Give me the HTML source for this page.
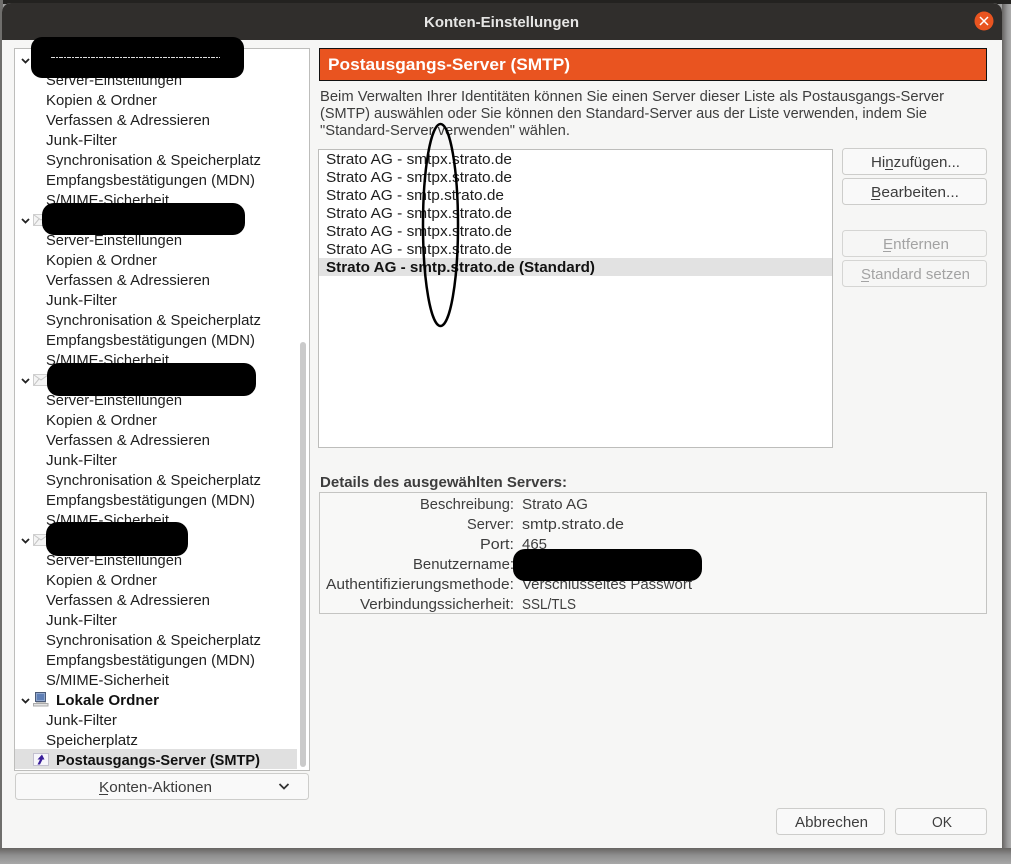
<!DOCTYPE html>
<html lang="de">
<head>
<meta charset="utf-8">
<title>Konten-Einstellungen</title>
<style>
html,body{margin:0;padding:0;background:#999;width:1011px;height:864px;overflow:hidden}
svg{display:block}
text{font-family:"Liberation Sans","DejaVu Sans",sans-serif;font-size:14.5px;fill:#3d3d3d}
.t text,text.t{fill:#1e1e1e}
text.b{font-weight:bold}
text.d{fill:#a3a3a3}
.btn{fill:#f9f9f9;stroke:#cdcdcb;stroke-width:1}
.btnd{fill:#f6f6f5;stroke:#d5d5d3;stroke-width:1}
.chev{fill:none;stroke:#222;stroke-width:1.8}
.u{stroke:#3d3d3d;stroke-width:1}
.ud{stroke:#a3a3a3;stroke-width:1}
</style>
</head>
<body>
<svg xmlns="http://www.w3.org/2000/svg" width="1011" height="864" viewBox="0 0 1011 864">
<defs>
<linearGradient id="sb" x1="0" y1="0" x2="0" y2="1"><stop offset="0" stop-color="#666462"/><stop offset=".45" stop-color="#8e8e8e"/><stop offset="1" stop-color="#a8a8a8"/></linearGradient>
<linearGradient id="sr" x1="0" y1="0" x2="1" y2="0"><stop offset="0" stop-color="#666462"/><stop offset=".6" stop-color="#999"/><stop offset="1" stop-color="#acacac"/></linearGradient>
</defs>

<!-- outside -->
<rect x="0" y="0" width="1011" height="864" fill="#a0a0a0"/>
<rect x="0" y="0" width="1011" height="4" fill="#232220"/>
<rect x="0" y="0" width="3" height="864" fill="#6f6e6c"/>
<rect x="1002" y="4" width="9" height="860" fill="url(#sr)"/>
<rect x="0" y="848" width="1011" height="16" fill="url(#sb)"/>

<!-- window -->
<path d="M2 848V12a9 9 0 0 1 9-9H993a9 9 0 0 1 9 9V848Z" fill="#f6f6f5"/>
<path d="M2 40V12a9 9 0 0 1 9-9H993a9 9 0 0 1 9 9V40Z" fill="#302e2c"/>
<text class="b" x="424" y="27" textLength="155" lengthAdjust="spacingAndGlyphs" style="fill:#e6e6e5">Konten-Einstellungen</text>
<circle cx="984" cy="21" r="9.500" fill="#e95420"/>
<path d="M980 17l8 8M988 17l-8 8" stroke="#fff" stroke-width="1.500" fill="none"/>

<!-- left tree -->
<rect x="14.500" y="48.500" width="295" height="722" fill="#fff" stroke="#bdbdbb"/>
<rect x="300" y="342" width="6" height="425" rx="3" fill="#cacaca"/>
<rect x="15" y="749" width="282" height="20" fill="#e0e0e0"/>

<g class="t">
<text x="46" y="85" textLength="136" lengthAdjust="spacingAndGlyphs">Server-Einstellungen</text>
<text x="46" y="105" textLength="111" lengthAdjust="spacingAndGlyphs">Kopien &amp; Ordner</text>
<text x="46" y="125" textLength="164" lengthAdjust="spacingAndGlyphs">Verfassen &amp; Adressieren</text>
<text x="46" y="145" textLength="71" lengthAdjust="spacingAndGlyphs">Junk-Filter</text>
<text x="46" y="165" textLength="215" lengthAdjust="spacingAndGlyphs">Synchronisation &amp; Speicherplatz</text>
<text x="46" y="185" textLength="209" lengthAdjust="spacingAndGlyphs">Empfangsbestätigungen (MDN)</text>
<text x="46" y="205" textLength="123" lengthAdjust="spacingAndGlyphs">S/MIME-Sicherheit</text>

<text x="46" y="245" textLength="136" lengthAdjust="spacingAndGlyphs">Server-Einstellungen</text>
<text x="46" y="265" textLength="111" lengthAdjust="spacingAndGlyphs">Kopien &amp; Ordner</text>
<text x="46" y="285" textLength="164" lengthAdjust="spacingAndGlyphs">Verfassen &amp; Adressieren</text>
<text x="46" y="305" textLength="71" lengthAdjust="spacingAndGlyphs">Junk-Filter</text>
<text x="46" y="325" textLength="215" lengthAdjust="spacingAndGlyphs">Synchronisation &amp; Speicherplatz</text>
<text x="46" y="345" textLength="209" lengthAdjust="spacingAndGlyphs">Empfangsbestätigungen (MDN)</text>
<text x="46" y="365" textLength="123" lengthAdjust="spacingAndGlyphs">S/MIME-Sicherheit</text>

<text x="46" y="405" textLength="136" lengthAdjust="spacingAndGlyphs">Server-Einstellungen</text>
<text x="46" y="425" textLength="111" lengthAdjust="spacingAndGlyphs">Kopien &amp; Ordner</text>
<text x="46" y="445" textLength="164" lengthAdjust="spacingAndGlyphs">Verfassen &amp; Adressieren</text>
<text x="46" y="465" textLength="71" lengthAdjust="spacingAndGlyphs">Junk-Filter</text>
<text x="46" y="485" textLength="215" lengthAdjust="spacingAndGlyphs">Synchronisation &amp; Speicherplatz</text>
<text x="46" y="505" textLength="209" lengthAdjust="spacingAndGlyphs">Empfangsbestätigungen (MDN)</text>
<text x="46" y="525" textLength="123" lengthAdjust="spacingAndGlyphs">S/MIME-Sicherheit</text>

<text x="46" y="565" textLength="136" lengthAdjust="spacingAndGlyphs">Server-Einstellungen</text>
<text x="46" y="585" textLength="111" lengthAdjust="spacingAndGlyphs">Kopien &amp; Ordner</text>
<text x="46" y="605" textLength="164" lengthAdjust="spacingAndGlyphs">Verfassen &amp; Adressieren</text>
<text x="46" y="625" textLength="71" lengthAdjust="spacingAndGlyphs">Junk-Filter</text>
<text x="46" y="645" textLength="215" lengthAdjust="spacingAndGlyphs">Synchronisation &amp; Speicherplatz</text>
<text x="46" y="665" textLength="209" lengthAdjust="spacingAndGlyphs">Empfangsbestätigungen (MDN)</text>
<text x="46" y="685" textLength="123" lengthAdjust="spacingAndGlyphs">S/MIME-Sicherheit</text>

<text class="b" x="56" y="705" textLength="103" lengthAdjust="spacingAndGlyphs" style="fill:#111">Lokale Ordner</text>
<text x="46" y="725" textLength="71" lengthAdjust="spacingAndGlyphs">Junk-Filter</text>
<text x="46" y="745" textLength="92" lengthAdjust="spacingAndGlyphs">Speicherplatz</text>
<text class="b" x="56" y="765" textLength="204" lengthAdjust="spacingAndGlyphs" style="fill:#111">Postausgangs-Server (SMTP)</text>
</g>

<!-- chevrons -->
<path class="chev" d="M22 59l3.500 3.500L29 59"/>
<path class="chev" d="M22 219l3.500 3.500L29 219"/>
<path class="chev" d="M22 379l3.500 3.500L29 379"/>
<path class="chev" d="M22 539l3.500 3.500L29 539"/>
<path class="chev" d="M22 699l3.500 3.500L29 699"/>

<!-- envelope icons -->
<g fill="#f4f4f4" stroke="#cfcfcf">
<rect x="33.500" y="214.500" width="15" height="11"/>
<rect x="33.500" y="374.500" width="15" height="11"/>
<rect x="33.500" y="534.500" width="15" height="11"/>
</g>
<g fill="none" stroke="#c6c6c6">
<path d="M34 215l7 5 7-5M34 225l5-6"/>
<path d="M34 375l7 5 7-5M34 385l5-6"/>
<path d="M34 535l7 5 7-5M34 545l5-6"/>
</g>

<!-- computer icon -->
<rect x="35.500" y="692.500" width="10" height="9" fill="#8fa6cc" stroke="#4a5a78"/>
<rect x="37" y="694" width="7" height="6" fill="#5f7fb6"/>
<rect x="36" y="702" width="10" height="1.500" fill="#c4c4c4"/>
<rect x="33.500" y="703.500" width="14.500" height="2.500" fill="#e2e2e2" stroke="#aaa"/>

<!-- smtp icon -->
<rect x="33.500" y="753.500" width="15" height="12" fill="#f7f6fb" stroke="#c3c0cf"/>
<path d="M37.500 764.500l2.500-5h-2.500l4.500-5 2.500 5h-2l-2.500 5z" fill="#3a1f9a"/>

<!-- Konten-Aktionen button -->
<rect class="btn" x="15.500" y="773.500" width="293" height="26" rx="3"/>
<text x="99" y="792" textLength="113" lengthAdjust="spacingAndGlyphs">Konten-Aktionen</text>
<path class="u" d="M99 794.500h9"/>
<path d="M279.500 784l4.500 4.500 4.500-4.500" fill="none" stroke="#333" stroke-width="1.800"/>

<!-- header -->
<rect x="319.500" y="48.500" width="667" height="32" fill="#e95420" stroke="#111"/>
<text class="b" x="328" y="70" textLength="242" lengthAdjust="spacingAndGlyphs" style="font-size:17px;fill:#fff">Postausgangs-Server (SMTP)</text>

<!-- description -->
<text x="320" y="101" textLength="624" lengthAdjust="spacingAndGlyphs">Beim Verwalten Ihrer Identitäten können Sie einen Server dieser Liste als Postausgangs-Server</text>
<text x="320" y="118" textLength="607" lengthAdjust="spacingAndGlyphs">(SMTP) auswählen oder Sie können den Standard-Server aus der Liste verwenden, indem Sie</text>
<text x="320" y="135" textLength="250" lengthAdjust="spacingAndGlyphs">"Standard-Server verwenden" wählen.</text>

<!-- server list -->
<rect x="318.500" y="149.500" width="514" height="298" fill="#fff" stroke="#bdbdbb"/>
<rect x="319" y="258" width="513" height="18" fill="#e2e2e2"/>
<g class="t">
<text x="326" y="164" textLength="186" lengthAdjust="spacingAndGlyphs">Strato AG - smtpx.strato.de</text>
<text x="326" y="182" textLength="186" lengthAdjust="spacingAndGlyphs">Strato AG - smtpx.strato.de</text>
<text x="326" y="200" textLength="178" lengthAdjust="spacingAndGlyphs">Strato AG - smtp.strato.de</text>
<text x="326" y="218" textLength="186" lengthAdjust="spacingAndGlyphs">Strato AG - smtpx.strato.de</text>
<text x="326" y="236" textLength="186" lengthAdjust="spacingAndGlyphs">Strato AG - smtpx.strato.de</text>
<text x="326" y="254" textLength="186" lengthAdjust="spacingAndGlyphs">Strato AG - smtpx.strato.de</text>
<text class="b" x="326" y="272" textLength="269" lengthAdjust="spacingAndGlyphs" style="fill:#111">Strato AG - smtp.strato.de (Standard)</text>
</g>

<!-- right buttons -->
<rect class="btn" x="842.500" y="148.500" width="144" height="26" rx="3"/>
<text x="871" y="167" textLength="89" lengthAdjust="spacingAndGlyphs">Hinzufügen...</text>
<path class="u" d="M885 169.500h8"/>
<rect class="btn" x="842.500" y="178.500" width="144" height="26" rx="3"/>
<text x="871" y="197" textLength="88" lengthAdjust="spacingAndGlyphs">Bearbeiten...</text>
<path class="u" d="M871 199.500h9"/>
<rect class="btnd" x="842.500" y="230.500" width="144" height="26" rx="3"/>
<text class="d" x="883" y="249" textLength="66" lengthAdjust="spacingAndGlyphs">Entfernen</text>
<path class="ud" d="M883 251.500h8"/>
<rect class="btnd" x="842.500" y="260.500" width="144" height="26" rx="3"/>
<text class="d" x="861" y="279" textLength="109" lengthAdjust="spacingAndGlyphs">Standard setzen</text>
<path class="ud" d="M861 281.500h8"/>

<!-- details -->
<text class="b" x="320" y="487" textLength="247" lengthAdjust="spacingAndGlyphs">Details des ausgewählten Servers:</text>
<rect x="319.500" y="492.500" width="667" height="121" fill="#f8f8f7" stroke="#c4c4c2"/>
<text x="420" y="509" textLength="94" lengthAdjust="spacingAndGlyphs">Beschreibung:</text>
<text x="467" y="529" textLength="47" lengthAdjust="spacingAndGlyphs">Server:</text>
<text x="480" y="549" textLength="34" lengthAdjust="spacingAndGlyphs">Port:</text>
<text x="413" y="569" textLength="101" lengthAdjust="spacingAndGlyphs">Benutzername:</text>
<text x="326" y="589" textLength="188" lengthAdjust="spacingAndGlyphs">Authentifizierungsmethode:</text>
<text x="360" y="609" textLength="154" lengthAdjust="spacingAndGlyphs">Verbindungssicherheit:</text>
<text x="522" y="509" textLength="66" lengthAdjust="spacingAndGlyphs">Strato AG</text>
<text x="522" y="529" textLength="102" lengthAdjust="spacingAndGlyphs">smtp.strato.de</text>
<text x="522" y="549" textLength="25" lengthAdjust="spacingAndGlyphs">465</text>
<text x="522" y="589" textLength="170" lengthAdjust="spacingAndGlyphs">Verschlüsseltes Passwort</text>
<text x="522" y="609" textLength="54" lengthAdjust="spacingAndGlyphs">SSL/TLS</text>

<!-- bottom buttons -->
<rect class="btn" x="776.500" y="808.500" width="108" height="26" rx="3"/>
<text x="795" y="827" textLength="73" lengthAdjust="spacingAndGlyphs">Abbrechen</text>
<rect class="btn" x="895.500" y="808.500" width="91" height="26" rx="3"/>
<text x="932" y="827" textLength="20" lengthAdjust="spacingAndGlyphs">OK</text>

<!-- annotations -->
<ellipse cx="440.500" cy="225" rx="17.500" ry="101" fill="none" stroke="#000" stroke-width="2.500"/>
<rect x="31" y="37" width="213" height="41" rx="11" fill="#000"/>
<path d="M51 57.500h169" stroke="#ddd" stroke-width="1" stroke-dasharray="4 1 2 1"/>
<rect x="42" y="203" width="203" height="32" rx="12" fill="#000"/>
<rect x="47" y="363" width="209" height="33" rx="12" fill="#000"/>
<rect x="46" y="522" width="142" height="34" rx="12" fill="#000"/>
<rect x="513" y="549" width="189" height="32" rx="12" fill="#000"/>
</svg>
</body>
</html>
